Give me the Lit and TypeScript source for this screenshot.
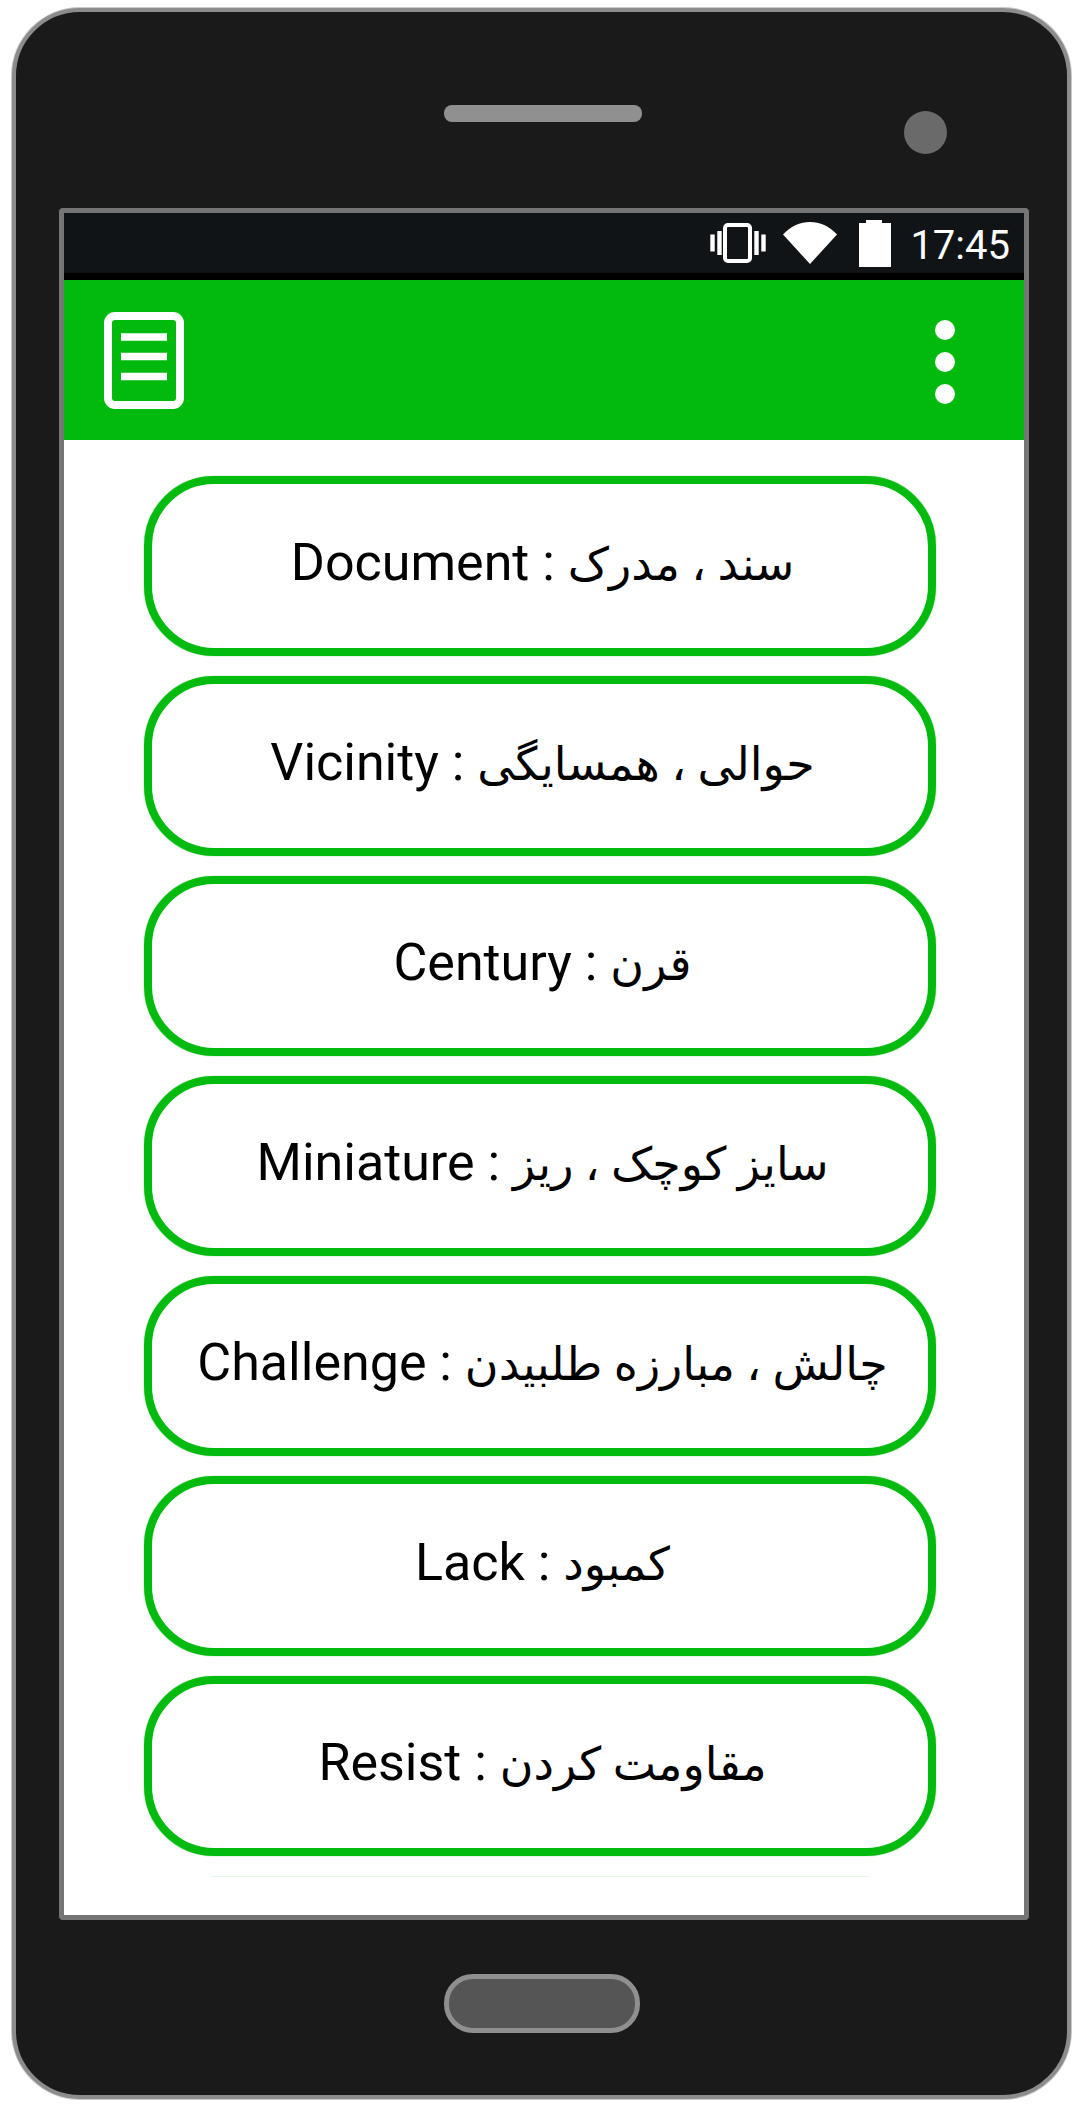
import { LitElement, html, css } from "lit";
import { customElement } from "lit/decorators.js";

const ITEMS = [
  ["Document", "سند ، مدرک"],
  ["Vicinity", "حوالی ، همسایگی"],
  ["Century", "قرن"],
  ["Miniature", "سایز کوچک ، ریز"],
  ["Challenge", "چالش ، مبارزه طلبیدن"],
  ["Lack", "کمبود"],
  ["Resist", "مقاومت کردن"],
];

@customElement("app-root")
export class AppRoot extends LitElement {
  static styles = css`
    :host { display: block; width: 1084px; height: 2112px; background: #fff; overflow: hidden; font-family: Roboto, "DejaVu Sans", sans-serif; }
    .stage { padding: 8px 0 0 12px; }
    .phone { box-sizing: border-box; width: 1059px; height: 2091px; background: #1a1a1a; border: 4px solid #8c8c8c; box-shadow: 0 0 0 1px #c8c8c8; border-radius: 68px; display: flex; flex-direction: column; align-items: center; }
    .top { box-sizing: border-box; width: 100%; height: 196px; padding-top: 93px; display: grid; grid-template-columns: 1fr 200px 1fr; align-items: start; }
    .speaker { grid-column: 2; justify-self: end; width: 198px; height: 17px; border-radius: 8px; background: #909090; }
    .camera { justify-self: end; width: 43px; height: 43px; margin: 6px 120px 0 0; border-radius: 50%; background: #6a6a6a; }
    .screen { box-sizing: border-box; width: 970px; height: 1712px; margin-left: 5px; border: 5px solid #757575; border-radius: 4px; background: #fff; }
    .status { box-sizing: border-box; height: 67px; background: #101417; border-bottom: 7px solid #000; display: flex; justify-content: flex-end; align-items: center; padding-right: 14px; }
    .status svg { display: block; flex: none; }
    .vib { margin-right: 17px; }
    .wifi { margin-right: 22px; margin-top: -1px; }
    .batt { margin-right: 19px; }
    .time { color: #fff; font-size: 40px; line-height: 46px; margin-top: 6px; }
    .appbar { height: 160px; background: #02b90e; display: flex; align-items: center; justify-content: space-between; padding: 0 69px 0 40px; }
    .dots { display: flex; flex-direction: column; gap: 12px; margin-top: 4px; }
    .dots i { display: block; width: 20px; height: 20px; border-radius: 50%; background: #fff; }
    .list { display: flex; flex-direction: column; align-items: center; gap: 20px; padding: 36px 8px 0 0; }
    .item { box-sizing: border-box; width: 792px; height: 180px; border: 8px solid #03bb0f; box-shadow: 0 0 1px #03bb0f; border-radius: 70px; display: flex; align-items: center; justify-content: center; padding: 0 0 8px 5px; font-size: 52px; color: #000; white-space: pre; }
    .fa { font-size: 46px; }
    .line { width: 658px; height: 1px; background: #e6f8e8; }
    .homewrap { flex: 1; display: flex; align-items: flex-start; padding-top: 54px; }
    .home { box-sizing: border-box; width: 196px; height: 59px; border: 5px solid #8f8f8f; border-radius: 29px; background: #555; }
  `;

  render() {
    return html`
      <div class="stage">
        <div class="phone">
          <div class="top"><div class="speaker"></div><div class="camera"></div></div>
          <div class="screen">
            <div class="status">
              <svg class="vib" width="56" height="40" viewBox="0 0 56 40">
                <rect x="15" y="2" width="25" height="36" rx="3" fill="none" stroke="#fff" stroke-width="4"/>
                <path d="M2.500 11.500v17M9.500 8v24M46.500 8v24M53.500 11.500v17" fill="none" stroke="#fff" stroke-width="4.400"/>
              </svg>
              <svg class="wifi" width="54" height="42" viewBox="0 0 54 42">
                <path d="M0 12.500C8 4 17 0 27 0s19 4 27 12.500L27 42Z" fill="#fff"/>
              </svg>
              <svg class="batt" width="32" height="47" viewBox="0 0 32 47">
                <path d="M7 0h16v3h9v44H0V3h7Z" fill="#fff"/>
              </svg>
              <span class="time">17:45</span>
            </div>
            <div class="appbar">
              <svg width="80" height="97" viewBox="0 0 80 97">
                <rect x="4" y="4" width="72" height="89" rx="7" fill="none" stroke="#fff" stroke-width="8"/>
                <path d="M17 25H63M17 44.500H63M17 64.500H63" fill="none" stroke="#fff" stroke-width="7.600"/>
              </svg>
              <div class="dots"><i></i><i></i><i></i></div>
            </div>
            <div class="list">
              ${ITEMS.map(([en, fa]) => html`<div class="item"><span>${en} : <span class="fa">${fa}</span></span></div>`)}
              <div class="line"></div>
            </div>
          </div>
          <div class="homewrap"><div class="home"></div></div>
        </div>
      </div>
    `;
  }
}
